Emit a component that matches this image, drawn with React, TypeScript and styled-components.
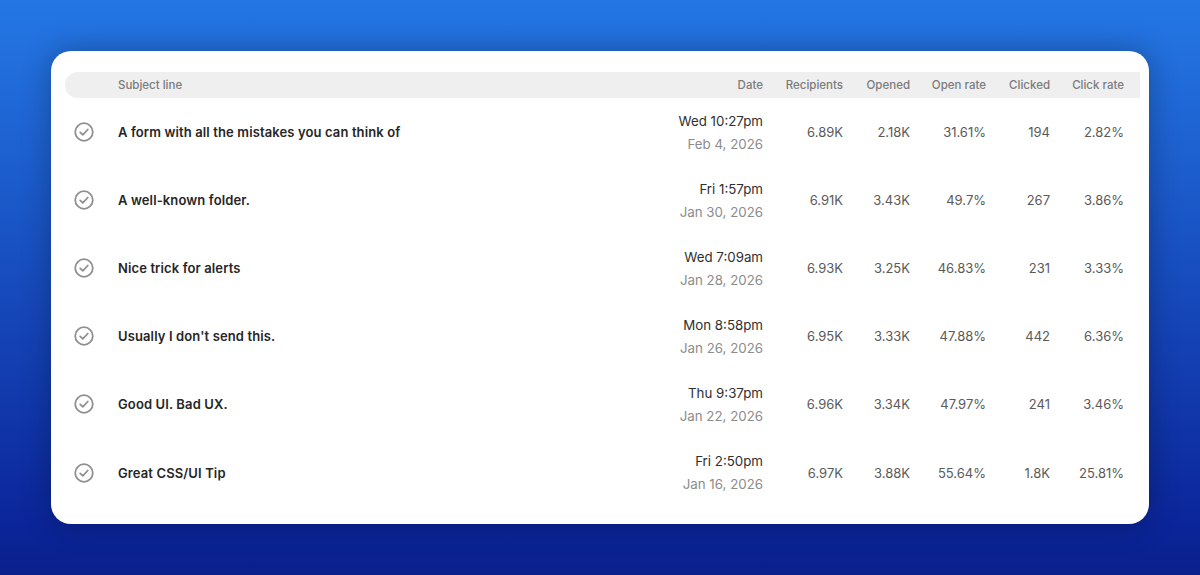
import styled, { createGlobalStyle } from 'styled-components';

const GlobalStyle = createGlobalStyle`
  html, body {
    margin: 0;
    padding: 0;
  }
  body {
    font-family: Inter, "Liberation Sans", sans-serif;
    -webkit-font-smoothing: antialiased;
  }
`;

const Page = styled.div`
  box-sizing: border-box;
  width: 1200px;
  height: 575px;
  padding: 51px;
  background: linear-gradient(180deg, #2376e5 0%, #2270de 9%, #0b259a 91%, #0a1f8a 100%);
`;

const Card = styled.div`
  box-sizing: border-box;
  height: 473px;
  padding: 21px 9px 0 14px;
  background: #fff;
  border-radius: 20px;
  box-shadow: 0 0 30px rgba(0, 0, 0, 0.3);
`;

const columns = '53px 1fr 80px 67px 76px 64px 74px';

const HeaderRow = styled.div`
  display: grid;
  grid-template-columns: ${columns};
  align-items: center;
  height: 26px;
  padding-right: 16px;
  background: #efefef;
  border-radius: 13px 0 0 13px;
`;

const HeaderCell = styled.div<{ $left?: boolean }>`
  font-size: 11.5px;
  font-weight: 500;
  color: #7b7b7b;
  text-align: ${(p) => (p.$left ? 'left' : 'right')};
`;

const SubjectHeader = styled(HeaderCell)`
  display: flex;
  justify-content: space-between;
`;

const Row = styled.div`
  display: grid;
  grid-template-columns: ${columns};
  align-items: center;
  height: 68.1px;
  padding-right: 16px;
`;

const IconCell = styled.div`
  display: flex;
  padding-left: 9px;
`;

const RowMain = styled.div`
  display: flex;
  align-items: center;
  justify-content: space-between;
`;

const Subject = styled.div`
  font-size: 13px;
  font-weight: 600;
  letter-spacing: 0.12px;
  color: #262626;
`;

const DateCell = styled.div`
  display: flex;
  flex-direction: column;
  gap: 5px;
  text-align: right;
  font-size: 13.3px;
  line-height: 18px;
`;

const DateTime = styled.span`
  color: #2f2f2f;
`;

const DateDay = styled.span`
  color: #8c8c8c;
`;

const Stat = styled.div`
  font-size: 13px;
  color: #5a5a5a;
  text-align: right;
`;

const CheckIcon = () => (
  <svg width="20" height="20" viewBox="0 0 20 20" fill="none" stroke="#909090" strokeWidth="1.8">
    <circle cx="10" cy="10" r="8.8" />
    <path d="M6.2 10.4l2.6 2.5 5-5.4" strokeLinecap="round" strokeLinejoin="round" />
  </svg>
);

const rows = [
  { subject: 'A form with all the mistakes you can think of', time: 'Wed 10:27pm', day: 'Feb 4, 2026', stats: ['6.89K', '2.18K', '31.61%', '194', '2.82%'] },
  { subject: 'A well-known folder.', time: 'Fri 1:57pm', day: 'Jan 30, 2026', stats: ['6.91K', '3.43K', '49.7%', '267', '3.86%'] },
  { subject: 'Nice trick for alerts', time: 'Wed 7:09am', day: 'Jan 28, 2026', stats: ['6.93K', '3.25K', '46.83%', '231', '3.33%'] },
  { subject: "Usually I don't send this.", time: 'Mon 8:58pm', day: 'Jan 26, 2026', stats: ['6.95K', '3.33K', '47.88%', '442', '6.36%'] },
  { subject: 'Good UI. Bad UX.', time: 'Thu 9:37pm', day: 'Jan 22, 2026', stats: ['6.96K', '3.34K', '47.97%', '241', '3.46%'] },
  { subject: 'Great CSS/UI Tip', time: 'Fri 2:50pm', day: 'Jan 16, 2026', stats: ['6.97K', '3.88K', '55.64%', '1.8K', '25.81%'] },
];

const headers = ['Recipients', 'Opened', 'Open rate', 'Clicked', 'Click rate'];

export default function App() {
  return (
    <Page>
      <GlobalStyle />
      <Card>
        <HeaderRow>
          <span />
          <SubjectHeader $left>
            <span>Subject line</span>
            <span>Date</span>
          </SubjectHeader>
          {headers.map((h) => (
            <HeaderCell key={h}>{h}</HeaderCell>
          ))}
        </HeaderRow>
        {rows.map((r) => (
          <Row key={r.subject}>
            <IconCell>
              <CheckIcon />
            </IconCell>
            <RowMain>
              <Subject>{r.subject}</Subject>
              <DateCell>
                <DateTime>{r.time}</DateTime>
                <DateDay>{r.day}</DateDay>
              </DateCell>
            </RowMain>
            {r.stats.map((s, i) => (
              <Stat key={i}>{s}</Stat>
            ))}
          </Row>
        ))}
      </Card>
    </Page>
  );
}
